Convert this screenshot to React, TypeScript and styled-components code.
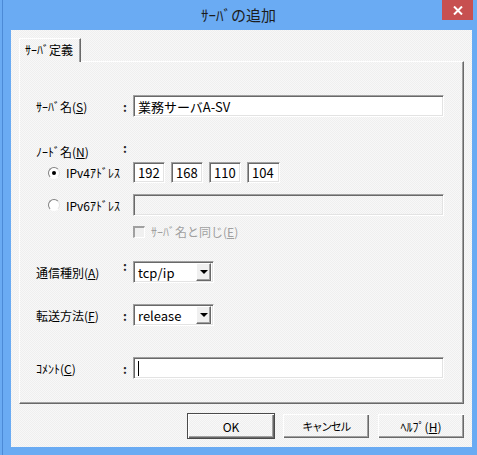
import React from 'react'
import styled, { createGlobalStyle } from 'styled-components'

const GlobalStyle = createGlobalStyle`
  html, body {
    margin: 0;
    padding: 0;
  }
  body {
    font-family: "Noto Sans CJK JP", "Liberation Sans", sans-serif;
    font-size: 12px;
    color: #000;
  }
`

const dither = 'repeating-conic-gradient(#efefef 0 25%, #f8f8f8 0 50%) 0 0 / 2px 2px'

const Window = styled.div`
  width: 477px;
  height: 455px;
  box-sizing: border-box;
  background: linear-gradient(to right, #6aabf3 0 2px, #4c8ad6 2px 3px, #6aabf3 3px);
  display: flex;
  flex-direction: column;
`

const TitleBar = styled.div`
  height: 30px;
  display: grid;
  grid-template-columns: 1fr auto 1fr;
  align-items: start;
`

const Title = styled.div`
  grid-column: 2;
  font-size: 15px;
  line-height: 30px;
  color: #1c1c1c;
`

const CloseButton = styled.div`
  grid-column: 3;
  justify-self: end;
  width: 31px;
  height: 20px;
  margin-right: 4px;
  background: #c75050;
  display: flex;
  align-items: center;
  justify-content: center;
`

const Client = styled.div`
  height: 417px;
  margin: 0 5px 0 11px;
  box-sizing: border-box;
  background: ${dither};
  padding: 8px 7px 0 8px;
  display: flex;
  flex-direction: column;
`

const TabStrip = styled.div`
  display: flex;
  height: 23px;
`

const Tab = styled.div`
  width: 62px;
  height: 24px;
  box-sizing: border-box;
  border-top: 1px solid #fff;
  border-left: 1px solid #fff;
  border-right: 1px solid #696969;
  box-shadow: inset -1px 0 0 #a0a0a0;
  padding-left: 5px;
  line-height: 22px;
  position: relative;
  z-index: 1;
  background: ${dither};
`

const Panel = styled.div`
  height: 343px;
  margin-right: 1px;
  box-sizing: border-box;
  border-top: 1px solid #fff;
  border-left: 1px solid #fff;
  border-right: 1px solid #696969;
  border-bottom: 1px solid #696969;
  box-shadow: inset -1px -1px 0 #a0a0a0;
  padding-left: 16px;
  display: flex;
  flex-direction: column;
`

const Row = styled.div<{ $top: number; $h: number }>`
  display: grid;
  grid-template-columns: 87px 10px 1fr;
  align-items: center;
  margin-top: ${p => p.$top}px;
  height: ${p => p.$h}px;
`

const Label = styled.div`
  white-space: nowrap;
`

const Colon = styled.div<{ $raise?: boolean }>`
  font-weight: bold;
  color: #222;
  align-self: ${p => (p.$raise ? 'start' : 'center')};
  margin-top: ${p => (p.$raise ? -4 : 0)}px;
`

const Sunken = styled.div<{ $w?: number; $disabled?: boolean }>`
  width: ${p => (p.$w ? `${p.$w}px` : '311px')};
  height: 100%;
  box-sizing: border-box;
  border-top: 1px solid #a0a0a0;
  border-left: 1px solid #a0a0a0;
  border-right: 1px solid #fff;
  border-bottom: 1px solid #fff;
  box-shadow: inset 1px 1px 0 #696969, inset -1px -1px 0 #e3e3e3;
  background: ${p => (p.$disabled ? dither : '#fff')};
  padding-left: 4px;
  display: flex;
  align-items: center;
  font-size: 13px;
`

const Caret = styled.span`
  width: 1px;
  height: 15px;
  background: #000;
`

const RadioLine = styled.div`
  grid-column: 1 / 3;
  display: flex;
  align-items: center;
  gap: 6px;
  padding-left: 12px;
  white-space: nowrap;
`

const Radio = styled.span<{ $on?: boolean }>`
  width: 12px;
  height: 12px;
  box-sizing: border-box;
  border-radius: 50%;
  border: 1px solid;
  border-color: #808080 #e3e3e3 #fff #808080;
  background: #fff;
  display: flex;
  align-items: center;
  justify-content: center;
  &::after {
    content: '';
    width: 4px;
    height: 4px;
    border-radius: 50%;
    background: ${p => (p.$on ? '#000' : 'transparent')};
  }
`

const Octets = styled.div`
  display: flex;
  gap: 6px;
  height: 100%;
`

const CheckLine = styled.div`
  grid-column: 3;
  display: flex;
  align-items: center;
  gap: 6px;
  color: #a0a0a0;
`

const CheckBox = styled.span`
  width: 12px;
  height: 12px;
  box-sizing: border-box;
  border-top: 2px solid #a0a0a0;
  border-left: 2px solid #a0a0a0;
  border-right: 1px solid #fff;
  border-bottom: 1px solid #fff;
  background: #f0f0f0;
`

const Combo = styled(Sunken)`
  width: 81px;
  padding-right: 2px;
  justify-content: space-between;
`

const DropButton = styled.span`
  width: 15px;
  height: 18px;
  box-sizing: border-box;
  background: #f0f0f0;
  border-top: 1px solid #fff;
  border-left: 1px solid #fff;
  border-right: 1px solid #696969;
  border-bottom: 1px solid #696969;
  box-shadow: inset -1px -1px 0 #a0a0a0;
  display: flex;
  align-items: center;
  justify-content: center;
  &::after {
    content: '';
    border-left: 4px solid transparent;
    border-right: 4px solid transparent;
    border-top: 4px solid #000;
  }
`

const ButtonBar = styled.div`
  display: flex;
  justify-content: flex-end;
  gap: 7px;
  margin-top: 9px;
`

const Button = styled.div<{ $default?: boolean }>`
  width: 88px;
  height: 26px;
  box-sizing: border-box;
  display: flex;
  align-items: center;
  justify-content: center;
  border: 1px solid ${p => (p.$default ? '#4a4a4a' : 'transparent')};
  box-shadow: inset 1px 1px 0 #fff, inset -1px -1px 0 #696969, inset -2px -2px 0 #a0a0a0;
  background: ${dither};
`

const Narrow = styled.span`
  font-size: 11px;
  letter-spacing: -1.5px;
`

export default function App() {
  return (
    <>
      <GlobalStyle />
      <Window>
        <TitleBar>
          <Title>ｻｰﾊﾞの追加</Title>
          <CloseButton>
            <svg width="10" height="9" viewBox="0 0 10 9">
              <path d="M1 0.5 L9 8.5 M9 0.5 L1 8.5" stroke="#fff" strokeWidth="2" />
            </svg>
          </CloseButton>
        </TitleBar>
        <Client>
          <TabStrip>
            <Tab>ｻｰﾊﾞ定義</Tab>
          </TabStrip>
          <Panel>
            <Row $top={33} $h={22}>
              <Label>ｻｰﾊﾞ名(<u>S</u>)</Label>
              <Colon>:</Colon>
              <Sunken>業務サーバA-SV</Sunken>
            </Row>
            <Row $top={26} $h={16}>
              <Label>ﾉｰﾄﾞ名(<u>N</u>)</Label>
              <Colon $raise>:</Colon>
            </Row>
            <Row $top={3} $h={21}>
              <RadioLine>
                <Radio $on />
                <span>IPv4ｱﾄﾞﾚｽ</span>
              </RadioLine>
              <Octets>
                <Sunken $w={32}>192</Sunken>
                <Sunken $w={32}>168</Sunken>
                <Sunken $w={32}>110</Sunken>
                <Sunken $w={33}>104</Sunken>
              </Octets>
            </Row>
            <Row $top={11} $h={22}>
              <RadioLine>
                <Radio />
                <span>IPv6ｱﾄﾞﾚｽ</span>
              </RadioLine>
              <Sunken $disabled />
            </Row>
            <Row $top={7} $h={16}>
              <CheckLine>
                <CheckBox />
                <span>ｻｰﾊﾞ名と同じ(<u>E</u>)</span>
              </CheckLine>
            </Row>
            <Row $top={22} $h={22}>
              <Label>通信種別(<u>A</u>)</Label>
              <Colon $raise>:</Colon>
              <Combo>
                <span>tcp/ip</span>
                <DropButton />
              </Combo>
            </Row>
            <Row $top={21} $h={22}>
              <Label>転送方法(<u>F</u>)</Label>
              <Colon>:</Colon>
              <Combo>
                <span>release</span>
                <DropButton />
              </Combo>
            </Row>
            <Row $top={31} $h={22}>
              <Label>ｺﾒﾝﾄ(<u>C</u>)</Label>
              <Colon>:</Colon>
              <Sunken>
                <Caret />
              </Sunken>
            </Row>
          </Panel>
          <ButtonBar>
            <Button $default>OK</Button>
            <Button>
              <Narrow>キャンセル</Narrow>
            </Button>
            <Button>
              <span>ﾍﾙﾌﾟ(<u>H</u>)</span>
            </Button>
          </ButtonBar>
        </Client>
      </Window>
    </>
  )
}
